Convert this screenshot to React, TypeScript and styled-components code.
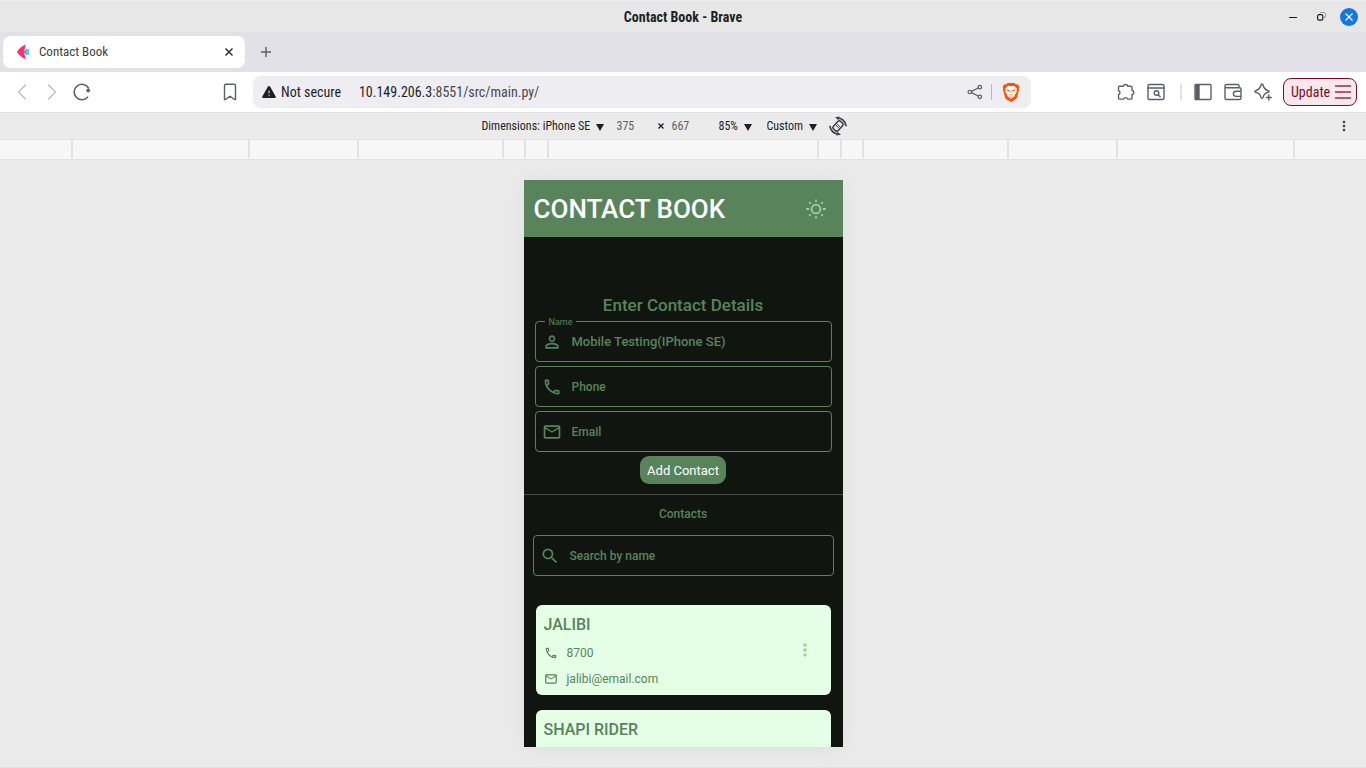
import React from "react";
import styled, { createGlobalStyle } from "styled-components";
import {
  MdMailOutline,
  MdMoreVert,
  MdOutlineLocalPhone,
  MdPersonOutline,
  MdSearch,
} from "react-icons/md";

const chrome = '"Roboto Condensed", Roboto, sans-serif';
const green = "#59835b";
const dark = "#111510";
const mint = "#e5ffe7";

const GlobalStyle = createGlobalStyle`
  * { box-sizing: border-box; }
  body { margin: 0; font-family: Roboto, sans-serif; background: #ebebeb; }
  button, input, select { font: inherit; color: inherit; margin: 0; padding: 0; border: 0; background: none; }
  button { cursor: pointer; }
  svg { display: block; flex: none; }
`;

const Window = styled.div`
  display: flex;
  flex-direction: column;
  min-height: 100vh;
  font-family: ${chrome};
  color: #1d1f24;
`;

const TitleBar = styled.header`
  display: grid;
  grid-template-columns: 1fr auto 1fr;
  align-items: center;
  height: 32px;
  background: #e7e7e7;
  border-top: 1px solid #efefef;
`;

const WindowTitle = styled.div`
  grid-column: 2;
  font-size: 14px;
  font-weight: 700;
  line-height: 16px;
`;

const WindowControls = styled.div`
  display: flex;
  justify-content: flex-end;
  align-items: center;
  gap: 10px;
  padding-right: 8px;
`;

const WindowButton = styled.button<{ $close?: boolean }>`
  display: grid;
  place-items: center;
  width: 18px;
  height: 18px;
  border-radius: 50%;
  background: ${(p) => (p.$close ? "#0f78e3" : "transparent")};
  color: ${(p) => (p.$close ? "#fff" : "#1d1f24")};
`;

const TabStrip = styled.div`
  display: flex;
  align-items: center;
  gap: 12px;
  height: 40px;
  padding-left: 3px;
  background: #e2e1e7;
`;

const Tab = styled.div`
  display: flex;
  align-items: center;
  width: 242px;
  height: 32px;
  padding: 0 10px 0 13px;
  border-radius: 8px;
  background: #fff;
`;

const TabTitle = styled.span`
  flex: 1;
  margin-left: 8px;
  font-size: 13px;
  line-height: 16px;
  color: #3c3d42;
`;

const IconButton = styled.button<{ $tone?: string }>`
  display: grid;
  place-items: center;
  color: ${(p) => p.$tone || "#5d5f66"};
`;

const Toolbar = styled.nav`
  display: flex;
  align-items: center;
  height: 41px;
  background: #fff;
  border-bottom: 1px solid #e1e1e6;
`;

const NavGroup = styled.div`
  display: flex;
  align-items: center;
  width: 253px;
  padding: 0 13px 0 12px;
  gap: 10px;
  & > :last-child { margin-left: auto; }
`;

const Omnibox = styled.div`
  display: flex;
  flex: 1;
  align-items: center;
  height: 32px;
  padding: 0 11px 0 9px;
  border-radius: 8px;
  background: #eeedf2;
`;

const SecurityChip = styled.button`
  display: flex;
  align-items: center;
  gap: 5px;
  font-size: 14px;
  line-height: 18px;
`;

const Address = styled.div`
  flex: 1;
  margin-left: 18px;
  font-size: 14px;
  line-height: 18px;
  color: #47484e;
  b { font-weight: 400; color: #1d1f24; }
`;

const Divider = styled.span<{ $bold?: boolean }>`
  width: ${(p) => (p.$bold ? 2 : 1)}px;
  height: 16px;
  margin: ${(p) => (p.$bold ? "0 1px 0 4px" : "0 10px 0 8px")};
  background: ${(p) => (p.$bold ? "#e1e1e6" : "#b7b7bd")};
`;

const ActionGroup = styled.div`
  display: flex;
  align-items: center;
  width: 335px;
  padding-left: 85px;
  gap: 10px;
`;

const UpdateButton = styled.button`
  display: flex;
  align-items: center;
  justify-content: space-between;
  width: 74px;
  height: 28px;
  padding: 0 5px 0 7px;
  border: 1px solid #7e0b2c;
  border-radius: 8px;
  background: #f6e9eb;
  color: #7e0b2c;
  font-size: 14px;
`;

const DeviceBar = styled.div`
  display: grid;
  grid-template-columns: 1fr auto 1fr;
  align-items: center;
  height: 26px;
  background: #ebebeb;
  font-size: 12px;
  line-height: 16px;
  & > :last-child { justify-self: end; margin-right: 14px; }
`;

const DeviceControls = styled.div`
  grid-column: 2;
  display: grid;
  grid-template-columns: 135px 41px 14px 47px 48px 61px 20px;
  align-items: center;
  justify-items: start;
  margin-right: 37px;
`;

const SelectWrap = styled.label<{ $w: number }>`
  display: flex;
  align-items: center;
  justify-content: space-between;
  width: ${(p) => p.$w}px;
`;

const Select = styled.select`
  appearance: none;
  flex: 1;
  min-width: 0;
  outline: 0;
`;

const SizeInput = styled.input`
  width: 36px;
  color: #606166;
`;

const Ruler = styled.div`
  display: flex;
  justify-content: center;
  height: 21px;
  padding-bottom: 1px;
  background: #f7f7f7;
  border-top: 1px solid #e1e1e6;
  border-bottom: 1px solid #e1e1e6;
`;

const Segment = styled.span<{ $w: number }>`
  width: ${(p) => p.$w}px;
  border-left: 2px solid #e1e1e6;
`;

const Stage = styled.main`
  display: flex;
  flex: 1;
  justify-content: center;
  align-items: flex-start;
  padding: 20px 0;
  background: #ebebeb;
  border-bottom: 1px solid #e1e1e1;
`;

const Device = styled.div`
  width: 319px;
  height: 567px;
  overflow: hidden;
  background: ${dark};
  color: ${green};
  font-family: Roboto, sans-serif;
  box-shadow: 0 2px 24px rgba(0, 0, 0, 0.06);
`;

const AppBar = styled.div`
  display: flex;
  align-items: center;
  justify-content: space-between;
  height: 57px;
  padding: 0 16px 0 10px;
  background: ${green};
`;

const AppTitle = styled.h1`
  margin: 0;
  font-size: 26px;
  font-weight: 500;
  line-height: 32px;
  color: #fff;
`;

const Form = styled.form`
  display: flex;
  flex-direction: column;
  align-items: center;
  gap: 4px;
  padding: 56px 11px 10px;
  border-bottom: 1px solid #434a43;
`;

const FormTitle = styled.h2`
  margin: 0;
  font-size: 17px;
  font-weight: 500;
  line-height: 24px;
`;

const FieldBox = styled.label`
  position: relative;
  display: flex;
  align-items: center;
  gap: 10px;
  width: 100%;
  height: 41px;
  padding-left: 6px;
  border: 1px solid ${green};
  border-radius: 4px;
`;

const FieldInput = styled.input`
  flex: 1;
  min-width: 0;
  font-size: 13px;
  font-weight: 500;
  line-height: 18px;
  outline: 0;
  &::placeholder { color: ${green}; opacity: 1; font-size: 12px; }
`;

const FloatingLabel = styled.span`
  position: absolute;
  top: -6px;
  left: 9px;
  padding: 0 4px;
  background: ${dark};
  font-size: 9px;
  line-height: 12px;
`;

const AddButton = styled.button`
  height: 28px;
  padding: 0 7px;
  border-radius: 9px;
  background: ${green};
  color: #fff;
  font-size: 13px;
`;

const Contacts = styled.section`
  padding: 10px 9px 0;
`;

const ContactsTitle = styled.h3`
  margin: 0 0 12px;
  font-size: 12px;
  font-weight: 500;
  line-height: 18px;
  text-align: center;
`;

const CardList = styled.ul`
  display: flex;
  flex-direction: column;
  gap: 15px;
  margin: 29px 3px 0;
  padding: 0;
  list-style: none;
`;

const Card = styled.li`
  display: flex;
  align-items: center;
  justify-content: space-between;
  height: 90px;
  padding: 0 16px 0 8px;
  border-radius: 6px;
  background: ${mint};
`;

const CardBody = styled.div`
  align-self: flex-start;
  padding-top: 10px;
`;

const CardName = styled.h4`
  margin: 0 0 9px;
  font-size: 16px;
  font-weight: 500;
  line-height: 20px;
`;

const CardLine = styled.p`
  display: flex;
  align-items: center;
  gap: 9px;
  margin: 0 0 8px;
  font-size: 12px;
  line-height: 18px;
`;

const Stroke = ({ size = 20, w = 1.4, children }: { size?: number; w?: number; children: React.ReactNode }) => (
  <svg width={size} height={size} viewBox="0 0 20 20" fill="none" stroke="currentColor" strokeWidth={w} strokeLinecap="round" strokeLinejoin="round">
    {children}
  </svg>
);

const Caret = () => (
  <svg width="8" height="9" viewBox="0 0 8 9"><path d="M0 2h8L4 9z" fill="#1d1f24" /></svg>
);

const Sun = () => (
  <svg width="22" height="22" viewBox="0 0 22 22" fill="none" stroke="#94d69a" strokeWidth="1.8">
    <circle cx="11" cy="11" r="4.4" />
    <path d="M11 1.600v2.200M11 18.200v2.200M1.200 11h3M17.800 11h3M4.200 4.200l1.500 1.500M16.300 16.300l1.500 1.500M17.800 4.200l-1.500 1.500M5.700 16.300l-1.500 1.500" />
  </svg>
);

const RotateDevice = () => (
  <svg width="20" height="20" viewBox="0 0 20 20" fill="none" stroke="currentColor" strokeWidth="1.700">
    <rect x="6.800" y="4.800" width="6.400" height="10.400" rx="2" transform="rotate(42 10 10)" strokeWidth="1.500" />
    <path d="M9 7.800l3.200 3.400M7.800 9l3.200 3.400" strokeWidth="0.900" />
    <path d="M9 1.900Q16.600 2.200 18.200 10.200M11 18.100Q3.400 17.800 1.800 9.800" />
    <path d="M7 1.200L11.600.6L10.600 4.200zM13 18.800L8.400 19.400L9.400 15.800z" fill="currentColor" stroke="none" />
  </svg>
);

const BraveLion = () => (
  <svg width="18" height="20" viewBox="0 0 18 20">
    <path d="M5.500 1h7l1.500 1.500l1.800-.2L17.300 5l-.5 1.700l.2 1.200l-2 7.400q-.5 1.500-2 2.500L9 20l-4-2.200q-1.500-1-2-2.500L1 7.900l.2-1.200L.7 5l1.500-2.700l1.800.2z" fill="#ff5000" />
    <path d="M6 3.800L9 4.300L12 3.800L14.800 6.600L14.500 8.500L14.800 10L12.600 13L12.800 14L9 17L5.200 14L5.400 13L3.200 10L3.500 8.500L3.200 6.600z" fill="#fff" />
    <path d="M4.500 7.200l3 .7l.2 1.200l-2 .2zM13.500 7.200l-3 .7l-.2 1.200l2 .2zM7.200 12L9 12.800L10.800 12L9 13.800zM6.400 14.200L9 15l2.600-.8L9 16z" fill="#ff5000" />
    <path d="M8.300 8.500l-.7 2.700M9.700 8.500l.7 2.700" stroke="#ff5000" strokeWidth="0.500" />
  </svg>
);

type FieldProps = { label: string; icon: React.ReactNode; value?: string; type?: string };

const Field = ({ label, icon, value, type = "text" }: FieldProps) => (
  <FieldBox>
    {value && <FloatingLabel>{label}</FloatingLabel>}
    {icon}
    <FieldInput type={type} aria-label={label} placeholder={label} defaultValue={value} />
  </FieldBox>
);

const Dropdown = ({ label, value, width }: { label: string; value: string; width: number }) => (
  <SelectWrap $w={width}>
    <Select aria-label={label}><option>{value}</option></Select>
    <Caret />
  </SelectWrap>
);

const segments = [177, 109, 145, 22, 23, 270, 23, 22, 145, 109, 177, 2];
const contacts = [
  { name: "JALIBI", phone: "8700", email: "jalibi@email.com" },
  { name: "SHAPI RIDER" },
];

export default function App() {
  return (
    <Window>
      <GlobalStyle />
      <TitleBar>
        <WindowTitle>Contact Book - Brave</WindowTitle>
        <WindowControls>
          <WindowButton aria-label="Minimize">
            <svg width="8" height="8" viewBox="0 0 8 8"><path d="M0 4.500h8" stroke="currentColor" /></svg>
          </WindowButton>
          <WindowButton aria-label="Restore">
            <svg width="9" height="9" viewBox="0 0 9 9" fill="none" stroke="currentColor">
              <path d="M3 1.500q0-1 1-1h2.500q2 0 2 2v1.500q0 1.500-1.500 1.500" strokeOpacity="0.4" />
              <rect x="0.600" y="2.600" width="5.200" height="5.600" rx="1.600" strokeWidth="1.200" />
            </svg>
          </WindowButton>
          <WindowButton $close aria-label="Close window">
            <svg width="8" height="8" viewBox="0 0 8 8"><path d="M.5.5l7 7M7.500.5l-7 7" stroke="currentColor" strokeWidth="1.200" /></svg>
          </WindowButton>
        </WindowControls>
      </TitleBar>

      <TabStrip>
        <Tab>
          <svg width="15" height="16" viewBox="0 0 15 16">
            <path d="M1 8Q4 3 9.800.6Q8.800 4 8 8Q8.800 12 9.800 15.400Q4 13 1 8z" fill="#f4326c" />
            <path d="M7 8l4-3.400v6.800z" fill="#4a9be0" />
            <path d="M9.400 8q1.200-3.200 3.800-3.600v7.200q-2.600-.4-3.800-3.600z" fill="#5cc8f2" />
          </svg>
          <TabTitle>Contact Book</TabTitle>
          <IconButton $tone="#2f3136" aria-label="Close tab">
            <svg width="12" height="12" viewBox="0 0 12 12"><path d="M2.500 2.500l7 7M9.500 2.500l-7 7" stroke="currentColor" strokeWidth="1.500" /></svg>
          </IconButton>
        </Tab>
        <IconButton aria-label="New tab">
          <svg width="18" height="18" viewBox="0 0 18 18"><path d="M9 4v10M4 9h10" stroke="currentColor" strokeWidth="1.400" /></svg>
        </IconButton>
      </TabStrip>

      <Toolbar>
        <NavGroup>
          <IconButton $tone="#bdbec2" aria-label="Back"><Stroke><path d="M13.500 3L6.500 10l7 7" /></Stroke></IconButton>
          <IconButton $tone="#bdbec2" aria-label="Forward"><Stroke><path d="M6.500 3l7 7l-7 7" /></Stroke></IconButton>
          <IconButton aria-label="Reload">
            <Stroke w={1.600}><path d="M16.500 6A7.700 7.700 0 1 0 15.600 15.200" /><circle cx="16.200" cy="8.500" r="1.500" fill="currentColor" stroke="currentColor" strokeWidth="1" /></Stroke>
          </IconButton>
          <IconButton aria-label="Bookmark"><Stroke><path d="M4.500 17.500V3.700q0-1.500 1.500-1.500h8q1.500 0 1.500 1.500v13.800h-1L10 14.300L5.500 17.500z" /></Stroke></IconButton>
        </NavGroup>
        <Omnibox>
          <SecurityChip>
            <svg width="14" height="14" viewBox="0 0 14 14">
              <path d="M7 1q.8 0 1.200.7l5.300 9.500q.8 1.800-1 1.800h-11q-1.800 0-1-1.800L5.800 1.700Q6.200 1 7 1z" fill="#1d1f24" />
              <path d="M7 5.500v3M7 9.800v1.400" stroke="#eeedf2" strokeWidth="1.200" strokeOpacity="0.8" />
            </svg>
            Not secure
          </SecurityChip>
          <Address><b>10.149.206.3</b>:8551/src/main.py/</Address>
          <IconButton aria-label="Share">
            <Stroke size={16} w={1.500}><circle cx="3.500" cy="10" r="2.200" /><circle cx="16" cy="4" r="2.200" /><circle cx="16" cy="16" r="2.200" /><path d="M5.600 9.200L14 5M5.600 10.800L14 15" /></Stroke>
          </IconButton>
          <Divider />
          <IconButton aria-label="Brave Shields"><BraveLion /></IconButton>
        </Omnibox>
        <ActionGroup>
          <IconButton aria-label="Extensions">
            <Stroke><path d="M3.500 4.200h3.700a2.400 2.400 0 0 1 4.600 0h3q1.200 0 1.200 1.200v2.900a2.300 2.300 0 0 1 0 4.500v3.100q0 1.200-1.200 1.200h-3.200a2.100 2.100 0 0 0-4 0H3.700q-1.200 0-1.200-1.200v-3.200a2.100 2.100 0 0 0 0-4V5.400q0-1.200 1-1.200z" /></Stroke>
          </IconButton>
          <IconButton aria-label="Search tabs"><Stroke><rect x="2" y="2.500" width="16" height="15" rx="1.500" /><path d="M2 6h16M12.200 12.700l2 2" /><circle cx="10.500" cy="11" r="2.300" /></Stroke></IconButton>
          <Divider $bold />
          <IconButton aria-label="Sidebar"><Stroke><rect x="2" y="2.500" width="16" height="15" rx="1" /><path d="M3 3h3v14H3z" fill="currentColor" /></Stroke></IconButton>
          <IconButton aria-label="Wallet"><Stroke><path d="M16 5.700V4q0-1.500-1.500-1.500h-11Q2 2.500 2 4v12q0 1.500 1.500 1.500h13q1.500 0 1.500-1.500V7.200q0-1.500-1.500-1.500H4Q2 5.700 2 4.500M18 9.200h-5a2.600 2.600 0 0 0 0 5.200h5" /></Stroke></IconButton>
          <IconButton aria-label="Leo assistant"><Stroke><path d="M9 2q.7 0 1 1Q11 7.500 15.500 8.800q1.300.7 0 1.300Q11 11.200 10 15.500Q9 17.300 8 15.500Q7 11.200 2.500 10.100q-1.300-.6 0-1.300Q7 7.500 8 3q.3-1 1-1zM15.800 13v5M13.300 15.500h5" /></Stroke></IconButton>
          <UpdateButton>
            Update
            <svg width="16" height="16" viewBox="0 0 16 16"><path d="M0 2h16M0 8h16M0 14h16" stroke="#9b2d49" strokeWidth="1.600" /></svg>
          </UpdateButton>
        </ActionGroup>
      </Toolbar>

      <DeviceBar>
        <DeviceControls>
          <Dropdown label="Device" value="Dimensions: iPhone SE" width={122} />
          <SizeInput aria-label="Width" defaultValue="375" />
          <IconButton $tone="#1d1f24" aria-label="Swap">
            <svg width="6" height="6" viewBox="0 0 6 6"><path d="M.5.5l5 5M5.500.5l-5 5" stroke="currentColor" strokeWidth="1.300" /></svg>
          </IconButton>
          <SizeInput aria-label="Height" defaultValue="667" />
          <Dropdown label="Zoom" value="85%" width={33} />
          <Dropdown label="Throttling" value="Custom" width={50} />
          <IconButton aria-label="Rotate" $tone="#3f4045"><RotateDevice /></IconButton>
        </DeviceControls>
        <IconButton aria-label="More options" $tone="#3f4045"><MdMoreVert size={16} /></IconButton>
      </DeviceBar>

      <Ruler>
        {segments.map((w, i) => <Segment key={i} $w={w} />)}
      </Ruler>

      <Stage>
        <Device>
          <AppBar>
            <AppTitle>CONTACT BOOK</AppTitle>
            <IconButton aria-label="Toggle theme"><Sun /></IconButton>
          </AppBar>
          <Form>
            <FormTitle>Enter Contact Details</FormTitle>
            <Field label="Name" value="Mobile Testing(IPhone SE)" icon={<MdPersonOutline size={20} />} />
            <Field label="Phone" type="tel" icon={<MdOutlineLocalPhone size={20} />} />
            <Field label="Email" type="email" icon={<MdMailOutline size={20} />} />
            <AddButton type="button">Add Contact</AddButton>
          </Form>
          <Contacts>
            <ContactsTitle>Contacts</ContactsTitle>
            <Field label="Search by name" type="search" icon={<MdSearch size={20} />} />
            <CardList>
              {contacts.map((c) => (
                <Card key={c.name}>
                  <CardBody>
                    <CardName>{c.name}</CardName>
                    {c.phone && <CardLine><MdOutlineLocalPhone size={14} />{c.phone}</CardLine>}
                    {c.email && <CardLine><MdMailOutline size={14} />{c.email}</CardLine>}
                  </CardBody>
                  <IconButton $tone="#94d69a" aria-label={`Options for ${c.name}`}><MdMoreVert size={20} /></IconButton>
                </Card>
              ))}
            </CardList>
          </Contacts>
        </Device>
      </Stage>
    </Window>
  );
}
